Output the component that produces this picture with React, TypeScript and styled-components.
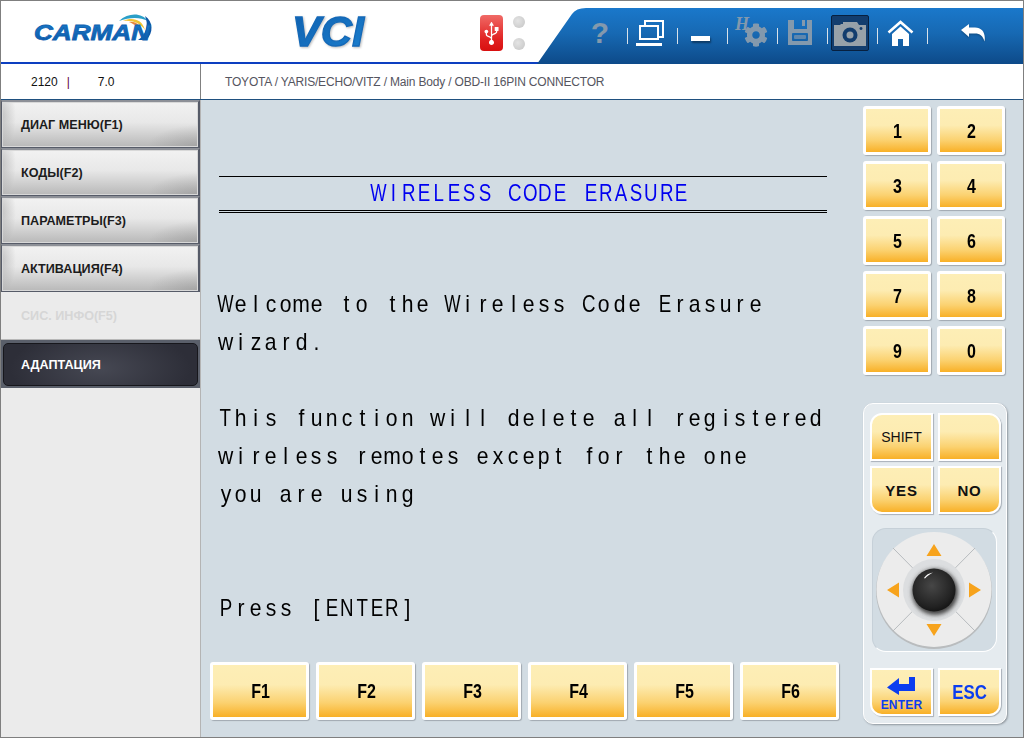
import styled, { createGlobalStyle } from "styled-components";
import { FaCog, FaUsb } from "react-icons/fa";

const NUMBERS = ["1", "2", "3", "4", "5", "6", "7", "8", "9", "0"];
const F_KEYS = ["F1", "F2", "F3", "F4", "F5", "F6"];

type MenuState = "normal" | "disabled" | "active";

const MENU: { label: string; state: MenuState }[] = [
  { label: "ДИАГ МЕНЮ(F1)", state: "normal" },
  { label: "КОДЫ(F2)", state: "normal" },
  { label: "ПАРАМЕТРЫ(F3)", state: "normal" },
  { label: "АКТИВАЦИЯ(F4)", state: "normal" },
  { label: "СИС. ИНФО(F5)", state: "disabled" },
  { label: "АДАПТАЦИЯ", state: "active" },
];

const GlobalStyle = createGlobalStyle`
  html, body {
    margin: 0;
    padding: 0;
    background: #fff;
    font-family: "Liberation Sans", Arial, sans-serif;
  }
`;

function glyphScale(ch: string) {
  if (ch === "W" || ch === "M") return 0.72;
  return /[A-Z]/.test(ch) ? 0.78 : 0.88;
}

// the scan tool prints on a fixed pitch, every char sits centered in its own cell
function Terminal({ text }: { text: string }) {
  return (
    <>
      {text.split("").map((ch, i) => (
        <Cell key={i}>
          <Glyph $scale={glyphScale(ch)}>{ch}</Glyph>
        </Cell>
      ))}
    </>
  );
}

function CarmanLogo() {
  return (
    <svg width="122" height="34" viewBox="0 0 122 34">
      <defs>
        <linearGradient id="carmanBlue" x1="0" y1="0" x2="0" y2="1">
          <stop offset="0" stopColor="#1a7ccb" />
          <stop offset="1" stopColor="#0c55a5" />
        </linearGradient>
      </defs>
      <g transform="translate(-1 2)">
        <path d="M87 8 C97 -1 110 0 116 8 C108 4 98 4 87 8Z" fill="#2a9fc8" />
        <path d="M91 8 C100 4 110 6 113 17 C108 10 100 7 91 8Z" fill="#f2c232" />
        <path d="M97 9 C104 8 109 12 110 20 C106 14 102 11 97 9Z" fill="#e8863a" />
        <path d="M113 3 C121 8 122 20 114 27 L106 27 C114 22 117 12 113 3Z" fill="#0c55a5" />
      </g>
      <text
        x="1"
        y="29"
        textLength="116"
        lengthAdjust="spacingAndGlyphs"
        fontFamily="Liberation Sans"
        fontWeight="700"
        fontStyle="italic"
        fontSize="22"
        fill="url(#carmanBlue)"
        stroke="#0f62b0"
        strokeWidth="0.8"
      >
        CARMAN
      </text>
    </svg>
  );
}

function VciLogo() {
  return (
    <svg width="90" height="60" viewBox="0 0 90 60">
      <defs>
        <linearGradient id="vciBlue" x1="0" y1="0" x2="1" y2="1">
          <stop offset="0" stopColor="#0f5fae" />
          <stop offset="1" stopColor="#1b80cf" />
        </linearGradient>
      </defs>
      <text
        x="1"
        y="45"
        textLength="72"
        lengthAdjust="spacingAndGlyphs"
        fontFamily="Liberation Sans"
        fontWeight="700"
        fontStyle="italic"
        fontSize="42"
        fill="url(#vciBlue)"
        stroke="#1469b8"
        strokeWidth="1.300"
        style={{ filter: "drop-shadow(1px 1px 1px #bbb)" }}
      >
        VCI
      </text>
    </svg>
  );
}

function WindowsIcon() {
  return (
    <svg width="28" height="26" viewBox="0 0 28 26" fill="none" stroke="#fff" strokeWidth="2">
      <path d="M9 5V1h18v16h-4" />
      <rect x="4" y="6" width="18" height="13" />
      <path d="M0 24.500h26" strokeWidth="3" />
    </svg>
  );
}

function FloppyIcon() {
  return (
    <svg width="26" height="26" viewBox="0 0 26 26">
      <path
        fill="#8399ad"
        fillRule="evenodd"
        d="M1 0h24v25H1z M7 0v9h13V0h-2v6h-3V0z M5 14a1 1 0 0 1 1-1h14a1 1 0 0 1 1 1v6a1 1 0 0 1-1 1H6a1 1 0 0 1-1-1z"
      />
      <rect x="7" y="15" width="12" height="4" rx="1" fill="#5f87ad" />
    </svg>
  );
}

function CameraIcon() {
  return (
    <svg width="34" height="26" viewBox="0 0 34 26">
      <path
        fill="#97a1a9"
        fillRule="evenodd"
        d="M1 5h6l1-1h2V2h14l2 3h7v21H1z M28 7a1.500 1.500 0 1 0 .01 0z"
      />
      <circle cx="17" cy="15" r="7.500" fill="#123d6e" />
      <circle cx="17" cy="15" r="3.500" fill="#97a1a9" />
    </svg>
  );
}

function HomeIcon() {
  return (
    <svg width="27" height="26" viewBox="0 0 27 26">
      <path d="M1.500 12.500 13.500 2l12 10.500" fill="none" stroke="#fff" strokeWidth="2.600" />
      <path fill="#fff" d="M5 14 13.500 6.500 22 14v12h-6v-7h-5v7H5z" />
    </svg>
  );
}

function BackIcon() {
  return (
    <svg width="25" height="18" viewBox="0 0 25 18">
      <path
        fill="#fff"
        d="M0 6 8 0v3.500h6C21 3.500 25 9 23.500 17.500 22 12 19 9.500 14 9.500H8V13z"
        style={{ filter: "drop-shadow(0 1px 1px rgba(0,0,0,0.3))" }}
      />
    </svg>
  );
}

function EnterArrow() {
  return (
    <svg width="28" height="18" viewBox="0 0 28 18">
      <path fill="#0b3df0" d="M0 10.500 12 1v6h10V0h6v14H12v4z" />
    </svg>
  );
}

function Joystick() {
  return (
    <svg width="118" height="118" viewBox="0 0 118 118">
      <defs>
        <radialGradient id="knob" cx="0.45" cy="0.4" r="0.65">
          <stop offset="0" stopColor="#474747" />
          <stop offset="0.75" stopColor="#222" />
          <stop offset="1" stopColor="#111" />
        </radialGradient>
        <filter id="soft" x="-30%" y="-30%" width="160%" height="160%">
          <feGaussianBlur stdDeviation="2" />
        </filter>
      </defs>
      <circle cx="59" cy="60" r="58" fill="#b9bcbe" />
      <circle cx="59" cy="58.500" r="57.500" fill="#ececec" />
      <path d="M18 17 100 100 M100 17 18 100" stroke="#b8bcbf" strokeWidth="1" />
      <circle cx="59" cy="59" r="31" fill="#dcdee0" />
      <circle cx="60" cy="61" r="23" fill="#444" filter="url(#soft)" />
      <circle cx="59" cy="59" r="21.500" fill="url(#knob)" />
      <path d="M49 47c2-3 5-5 9-5.500-3 1.500-6 3.500-8 6z" fill="#fff" />
      <path d="M59 13 66.500 25H51.500z M59 105 51.500 93H66.500z M12 59 24 51.500V66.500z M106 59 94 51.500V66.500z" fill="#f7a31c" />
    </svg>
  );
}

export default function App() {
  return (
    <Frame>
      <GlobalStyle />
      <Header>
        <LogoSlot>
          <CarmanLogo />
        </LogoSlot>
        <VciSlot>
          <VciLogo />
        </VciSlot>
        <UsbBadge>
          <UsbGlyph />
        </UsbBadge>
        <Leds>
          <Led />
          <Led />
        </Leds>
        <Toolbar>
          <ToolCell><HelpMark>?</HelpMark></ToolCell>
          <ToolCell $separated><WindowsIcon /></ToolCell>
          <ToolCell $separated><MinimizeBar /></ToolCell>
          <ToolCell $separated>
            <HsMark>H</HsMark>
            <GearIcon />
          </ToolCell>
          <ToolCell $separated><FloppyIcon /></ToolCell>
          <ToolCell $separated><CameraBox><CameraIcon /></CameraBox></ToolCell>
          <ToolCell $separated><HomeIcon /></ToolCell>
          <ToolCell $separated $wide><BackIcon /></ToolCell>
        </Toolbar>
      </Header>

      <InfoRow>
        <VersionCell>
          <span>2120</span>
          <Pipe>|</Pipe>
          <span>7.0</span>
        </VersionCell>
        <PathCell>TOYOTA / YARIS/ECHO/VITZ / Main Body / OBD-II 16PIN CONNECTOR</PathCell>
      </InfoRow>

      <Body>
        <Sidebar>
          {MENU.map((item) => (
            <MenuButton key={item.label} $state={item.state}>
              <MenuLabel $state={item.state}>{item.label}</MenuLabel>
            </MenuButton>
          ))}
        </Sidebar>

        <Main>
          <Console>
            <TitleBlock>
              <Title><Terminal text="WIRELESS CODE ERASURE" /></Title>
            </TitleBlock>
            <Line><Terminal text="Welcome to the Wireless Code Erasure" /></Line>
            <Line><Terminal text="wizard." /></Line>
            <Line />
            <Line><Terminal text="This function will delete all registered" /></Line>
            <Line><Terminal text="wireless remotes except for the one" /></Line>
            <Line><Terminal text="you are using" /></Line>
            <Line />
            <Line />
            <Line><Terminal text="Press [ENTER]" /></Line>
          </Console>
          <FunctionBar>
            {F_KEYS.map((key) => (
              <FunctionKey key={key}><KeyText>{key}</KeyText></FunctionKey>
            ))}
          </FunctionBar>
        </Main>

        <Keypad>
          <NumberGrid>
            {NUMBERS.map((n) => (
              <NumberKey key={n}><KeyText>{n}</KeyText></NumberKey>
            ))}
          </NumberGrid>
          <ControlPanel>
            <ControlGrid>
              <ControlKey $corner="tl">SHIFT</ControlKey>
              <ControlKey $corner="tr" />
              <ControlKey $corner="bl" $spaced>YES</ControlKey>
              <ControlKey $corner="br" $spaced>NO</ControlKey>
            </ControlGrid>
            <JoystickBox>
              <Joystick />
            </JoystickBox>
            <ControlGrid>
              <ControlKey $corner="bl" $blue>
                <EnterStack>
                  <EnterArrow />
                  <EnterLabel>ENTER</EnterLabel>
                </EnterStack>
              </ControlKey>
              <ControlKey $corner="br" $blue><EscText>ESC</EscText></ControlKey>
            </ControlGrid>
          </ControlPanel>
        </Keypad>
      </Body>
    </Frame>
  );
}

const keyFace = `
  background: linear-gradient(180deg, #fdeeb6 0%, #fdecb2 38%, #fbd271 72%, #f8b027 100%);
`;

const Frame = styled.div`
  width: 1024px;
  height: 738px;
  box-sizing: border-box;
  border: 1px solid #7f7f7f;
  display: flex;
  flex-direction: column;
  overflow: hidden;
  background: #fff;
`;

const Header = styled.header`
  height: 61px;
  flex: none;
  display: flex;
  align-items: flex-start;
  border-bottom: 2px solid #0d3fc0;
`;

const LogoSlot = styled.div`
  width: 122px;
  margin: 10px 0 0 32px;
  display: flex;
`;

const VciSlot = styled.div`
  width: 90px;
  height: 61px;
  margin-left: 136px;
  display: flex;
`;

const UsbBadge = styled.div`
  width: 23px;
  height: 36px;
  margin: 14px 0 0 99px;
  border-radius: 4px;
  background: linear-gradient(180deg, #f06a66 0%, #e02020 70%, #d81010 100%);
  color: #fff;
  display: flex;
  align-items: center;
  justify-content: center;
`;

const UsbGlyph = styled(FaUsb).attrs({ size: 25 })`
  transform: rotate(-90deg);
`;

const Leds = styled.div`
  margin: 15px 0 0 10px;
  display: flex;
  flex-direction: column;
  gap: 10px;
`;

const Led = styled.div`
  width: 12px;
  height: 12px;
  border-radius: 50%;
  background: radial-gradient(circle at 40% 40%, #e4e4e4, #c4c4c4);
`;

const Toolbar = styled.nav`
  margin-left: auto;
  align-self: flex-end;
  width: 486px;
  height: 56px;
  margin-bottom: -2px;
  box-sizing: border-box;
  padding: 0 0 6px 40px;
  display: flex;
  align-items: center;
  background: linear-gradient(180deg, #1a78cb 0%, #1769b3 45%, #0d4a89 100%);
  clip-path: path("M0 56 L35 6 Q39 0 49 0 L486 0 L486 56 Z");
`;

const ToolCell = styled.div<{ $separated?: boolean; $wide?: boolean }>`
  position: relative;
  flex: none;
  box-sizing: border-box;
  width: ${(p) => (p.$wide ? "96px" : "50px")};
  height: 40px;
  padding-right: 4px;
  display: flex;
  align-items: center;
  justify-content: center;
  ${(p) =>
    p.$separated &&
    `
    &::before {
      content: "";
      position: absolute;
      left: 0;
      top: 15px;
      width: 1px;
      height: 16px;
      background: #d8e2ea;
    }
  `}
`;

const HelpMark = styled.span`
  font: 700 30px "Liberation Sans", sans-serif;
  color: #8399ad;
`;

const MinimizeBar = styled.div`
  width: 19px;
  height: 5px;
  margin-top: 11px;
  background: #fff;
  box-shadow: 1px 2px 2px rgba(0, 0, 0, 0.4);
`;

const HsMark = styled.span`
  position: absolute;
  left: 8px;
  top: 1px;
  font: italic 700 18px "Liberation Serif", serif;
  color: #8399ad;
`;

const GearIcon = styled(FaCog).attrs({ size: 24, color: "#8399ad" })`
  margin: 4px 0 0 12px;
`;

const CameraBox = styled.div`
  width: 38px;
  height: 36px;
  display: flex;
  align-items: center;
  justify-content: center;
  box-sizing: border-box;
  background: #123d6e;
  border: 1px solid #07203f;
  border-radius: 2px;
`;

const InfoRow = styled.div`
  height: 35px;
  flex: none;
  display: flex;
  border-bottom: 1px solid #1f507f;
`;

const VersionCell = styled.div`
  width: 200px;
  flex: none;
  box-sizing: border-box;
  padding-left: 30px;
  display: flex;
  align-items: center;
  border-right: 1px solid #808080;
  font-size: 12px;
  color: #111;
`;

const Pipe = styled.span`
  margin: 0 28px 0 9px;
  color: #600040;
`;

const PathCell = styled.div`
  padding-left: 24px;
  display: flex;
  align-items: center;
  font-size: 12px;
  letter-spacing: -0.18px;
  color: #555560;
`;

const Body = styled.div`
  flex: 1;
  display: flex;
  min-height: 0;
  background: #d2dce3;
`;

const Sidebar = styled.aside`
  width: 200px;
  flex: none;
  box-sizing: border-box;
  background: #ebebeb;
  border-right: 1px solid #b4b4b4;
  display: flex;
  flex-direction: column;
`;

const MenuButton = styled.div<{ $state: MenuState }>`
  height: 48px;
  box-sizing: border-box;
  display: flex;
  ${(p) =>
    p.$state === "normal" &&
    `
    border: 2px solid #565b68;
    border-left-width: 1px;
    border-top-color: #8d9097;
    border-bottom-width: 1px;
    box-shadow: inset 0 0 0 1px #d8d8d8;
    background:
      radial-gradient(ellipse 14px 34px at 0 30%, rgba(140,140,140,0.4), transparent),
      radial-gradient(ellipse 50px 22px at 100% 100%, rgba(120,120,120,0.35), transparent),
      linear-gradient(180deg, #f2f2f2 0%, #e8e8e8 45%, #b8b8b8 100%);
  `}
  ${(p) =>
    p.$state === "disabled" &&
    `
    background: #ebebeb;
    border-bottom: 1px solid #b8b8b8;
  `}
  ${(p) =>
    p.$state === "active" &&
    `
    padding: 3px 2px 2px 2px;
    background: #5a5f6a;
  `}
`;

const MenuLabel = styled.span<{ $state: MenuState }>`
  flex: 1;
  display: flex;
  align-items: center;
  box-sizing: border-box;
  padding-left: ${(p) => (p.$state === "active" ? "17px" : p.$state === "normal" ? "19px" : "20px")};
  font-size: 12.6px;
  font-weight: 700;
  color: ${(p) =>
    p.$state === "disabled" ? "#d6d6d6" : p.$state === "active" ? "#fff" : "#1c1c1c"};
  ${(p) =>
    p.$state === "active" &&
    `
    border: 1px solid #17171c;
    border-radius: 5px;
    background: radial-gradient(ellipse 90px 40px at 50% 60%, #464853, #2d2e38);
  `}
`;

const Main = styled.main`
  flex: 1;
  min-width: 0;
  display: flex;
  flex-direction: column;
`;

const Console = styled.div`
  flex: 1;
  box-sizing: border-box;
  padding: 76px 0 0 18px;
`;

const TitleBlock = styled.div`
  width: 608px;
  height: 37px;
  box-sizing: border-box;
  border-top: 1px solid #000;
  border-bottom: 3px double #000;
  padding-bottom: 2px;
  display: flex;
  align-items: center;
  justify-content: center;
  margin-bottom: 73px;
`;

const Title = styled.div`
  padding-left: 14px;
  color: #0000f0;
  white-space: pre;
  font-size: 24px;
`;

const Line = styled.div`
  height: 38px;
  line-height: 36px;
  margin-left: -1px;
  font-size: 24px;
  color: #000;
  white-space: pre;
`;

const Cell = styled.span`
  display: inline-flex;
  justify-content: center;
  width: 15.15px;
  white-space: pre;
`;

const Glyph = styled.span<{ $scale: number }>`
  display: inline-block;
  flex: none;
  transform: scaleX(${(p) => p.$scale});
`;

const FunctionBar = styled.div`
  flex: none;
  display: flex;
  gap: 7px;
  padding: 0 0 17px 9px;
`;

const FunctionKey = styled.div`
  ${keyFace}
  width: 99px;
  height: 58px;
  box-sizing: border-box;
  border: 3px solid #fff;
  border-radius: 3px;
  box-shadow: 1px 1px 1px #a0a8b0;
  display: flex;
  align-items: center;
  justify-content: center;
  font: 700 20px "Liberation Sans", sans-serif;
  color: #000;
`;

const KeyText = styled.span`
  display: inline-block;
  padding: 1px 0 0 2px;
  transform: scaleX(0.8);
`;

const EscText = styled.span`
  display: inline-block;
  transform: scaleX(0.8);
`;

const Keypad = styled.div`
  width: 160px;
  flex: none;
  box-sizing: border-box;
  padding: 6px 0 0 0;
  display: flex;
  flex-direction: column;
`;

const NumberGrid = styled.div`
  display: grid;
  grid-template-columns: 68px 68px;
  grid-auto-rows: 49px;
  gap: 6px;
`;

const NumberKey = styled.div`
  ${keyFace}
  box-sizing: border-box;
  border: 3px solid #fff;
  border-radius: 3px;
  box-shadow: 1px 1px 1px #a0a8b0;
  display: flex;
  align-items: center;
  justify-content: center;
  font: 700 20px "Liberation Sans", sans-serif;
  color: #000;
`;

const ControlPanel = styled.div`
  width: 144px;
  height: 321px;
  margin-top: 28px;
  box-sizing: border-box;
  padding: 9px 6px 0;
  background: #e5ebef;
  border: 1px solid #fff;
  border-radius: 10px;
  box-shadow: 1px 1px 2px #8f979e;
`;

const ControlGrid = styled.div`
  display: grid;
  grid-template-columns: 63px 63px;
  gap: 5px 5px;
`;

const cornerRadius = { tl: "12px 0 0 0", tr: "0 12px 0 0", bl: "0 0 0 12px", br: "0 0 12px 0" };

const ControlKey = styled.div<{ $corner: "tl" | "tr" | "bl" | "br"; $blue?: boolean; $spaced?: boolean }>`
  ${keyFace}
  height: 48px;
  box-sizing: border-box;
  border: 2px solid #fff;
  border-radius: ${(p) => cornerRadius[p.$corner]};
  box-shadow: 1px 1px 1px #a8b0b8;
  display: flex;
  align-items: center;
  justify-content: center;
  font-size: ${(p) => (p.$blue ? "21px" : p.$spaced ? "15px" : "14px")};
  font-weight: ${(p) => (p.$blue || p.$spaced ? 700 : 400)};
  letter-spacing: ${(p) => (p.$spaced ? "0.8px" : "0")};
  color: ${(p) => (p.$blue ? "#0b3df0" : "#111")};
`;

const EnterStack = styled.div`
  display: flex;
  flex-direction: column;
  align-items: center;
  gap: 3px;
  padding-top: 4px;
`;

const EnterLabel = styled.span`
  font: 700 12px "Liberation Sans", sans-serif;
  letter-spacing: 0.2px;
`;

const JoystickBox = styled.div`
  width: 125px;
  height: 124px;
  box-sizing: border-box;
  margin: 14px 0 16px 2px;
  padding-right: 2px;
  background: #d2dce3;
  border-radius: 14px;
  border: 1px solid #c6d0d8;
  border-right: 1px solid #fff;
  border-bottom: 1px solid #fff;
  display: flex;
  align-items: center;
  justify-content: center;
`;
